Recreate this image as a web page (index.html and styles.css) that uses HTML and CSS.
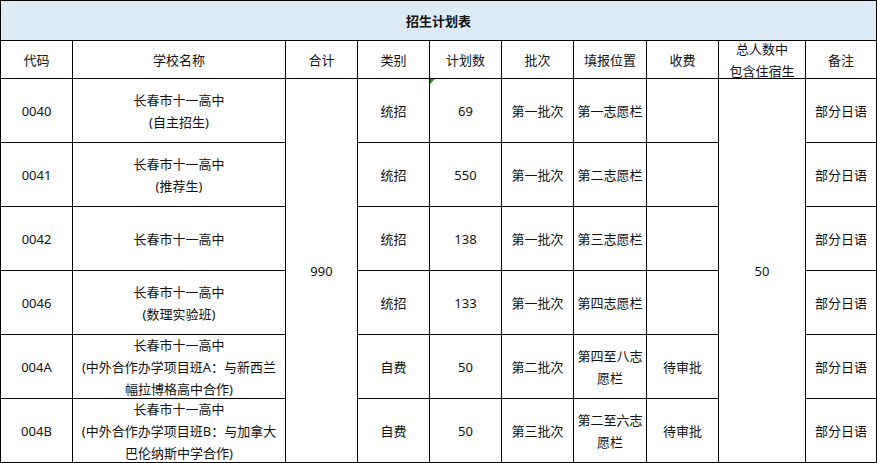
FILE: index.html
```html
<!DOCTYPE html>
<html lang="zh-CN">
<head>
<meta charset="utf-8">
<title>招生计划表</title>
<link rel="stylesheet" href="styles.css">
</head>
<body>
<table class="plan">
  <colgroup>
    <col class="c-code">
    <col class="c-name">
    <col class="c-total">
    <col class="c-type">
    <col class="c-count">
    <col class="c-batch">
    <col class="c-slot">
    <col class="c-fee">
    <col class="c-dorm">
    <col class="c-note">
  </colgroup>
  <thead>
    <tr><th colspan="10" class="title"><div class="cell title-cell">招生计划表</div></th></tr>
    <tr>
      <th><div class="cell head">代码</div></th>
      <th><div class="cell head">学校名称</div></th>
      <th><div class="cell head">合计</div></th>
      <th><div class="cell head">类别</div></th>
      <th><div class="cell head">计划数</div></th>
      <th><div class="cell head">批次</div></th>
      <th><div class="cell head">填报位置</div></th>
      <th><div class="cell head">收费</div></th>
      <th><div class="cell head">总人数中<br>包含住宿生</div></th>
      <th><div class="cell head">备注</div></th>
    </tr>
  </thead>
  <tbody>
    <tr>
      <td><div class="cell">0040</div></td>
      <td><div class="cell">长春市十一高中<br>(自主招生)</div></td>
      <td rowspan="6">990</td>
      <td><div class="cell">统招</div></td>
      <td class="flag"><div class="cell">69</div></td>
      <td><div class="cell">第一批次</div></td>
      <td><div class="cell">第一志愿栏</div></td>
      <td><div class="cell"></div></td>
      <td rowspan="6">50</td>
      <td><div class="cell">部分日语</div></td>
    </tr>
    <tr>
      <td><div class="cell">0041</div></td>
      <td><div class="cell">长春市十一高中<br>(推荐生)</div></td>
      <td><div class="cell">统招</div></td>
      <td><div class="cell">550</div></td>
      <td><div class="cell">第一批次</div></td>
      <td><div class="cell">第二志愿栏</div></td>
      <td><div class="cell"></div></td>
      <td><div class="cell">部分日语</div></td>
    </tr>
    <tr>
      <td><div class="cell">0042</div></td>
      <td><div class="cell">长春市十一高中</div></td>
      <td><div class="cell">统招</div></td>
      <td><div class="cell">138</div></td>
      <td><div class="cell">第一批次</div></td>
      <td><div class="cell">第三志愿栏</div></td>
      <td><div class="cell"></div></td>
      <td><div class="cell">部分日语</div></td>
    </tr>
    <tr>
      <td><div class="cell">0046</div></td>
      <td><div class="cell">长春市十一高中<br>(数理实验班)</div></td>
      <td><div class="cell">统招</div></td>
      <td><div class="cell">133</div></td>
      <td><div class="cell">第一批次</div></td>
      <td><div class="cell">第四志愿栏</div></td>
      <td><div class="cell"></div></td>
      <td><div class="cell">部分日语</div></td>
    </tr>
    <tr>
      <td><div class="cell">004A</div></td>
      <td><div class="cell">长春市十一高中<br>(中外合作办学项目班A：与新西兰<br>幅拉博格高中合作)</div></td>
      <td><div class="cell">自费</div></td>
      <td><div class="cell">50</div></td>
      <td><div class="cell">第二批次</div></td>
      <td><div class="cell">第四至八志<br>愿栏</div></td>
      <td><div class="cell">待审批</div></td>
      <td><div class="cell">部分日语</div></td>
    </tr>
    <tr>
      <td><div class="cell">004B</div></td>
      <td><div class="cell">长春市十一高中<br>(中外合作办学项目班B：与加拿大<br>巴伦纳斯中学合作)</div></td>
      <td><div class="cell">自费</div></td>
      <td><div class="cell">50</div></td>
      <td><div class="cell">第三批次</div></td>
      <td><div class="cell">第二至六志<br>愿栏</div></td>
      <td><div class="cell">待审批</div></td>
      <td><div class="cell">部分日语</div></td>
    </tr>
  </tbody>
</table>
</body>
</html>
```
FILE: styles.css
```css
html, body {
  margin: 0;
  padding: 0;
  background: #ffffff;
}

.plan {
  border-collapse: collapse;
  table-layout: fixed;
  width: 877px;
  font-family: "Noto Sans", "Noto Sans CJK SC", sans-serif;
  font-size: 13px;
  line-height: 22px;
  color: #111111;
}

.c-code { width: 72px; }
.c-name { width: 213px; }
.c-total { width: 72px; }
.c-type { width: 72px; }
.c-count { width: 72px; }
.c-batch { width: 72px; }
.c-slot { width: 73px; }
.c-fee { width: 72px; }
.c-dorm { width: 87px; }
.c-note { width: 71px; }

.plan th,
.plan td {
  border: 1px solid #000000;
  padding: 0;
  text-align: center;
  vertical-align: middle;
  font-weight: normal;
  white-space: nowrap;
}

.cell {
  height: 63px;
  display: flex;
  flex-direction: column;
  align-items: center;
  justify-content: center;
  overflow: visible;
}

.cell.head {
  height: 37px;
}

.cell.title-cell {
  height: 39px;
}

.plan th.title {
  background: #ddebf7;
  font-weight: bold;
}

.plan td.flag {
  position: relative;
}

.plan td.flag::before {
  content: "";
  position: absolute;
  left: 0;
  top: 0;
  width: 0;
  height: 0;
  border-top: 5px solid #1e8c1e;
  border-right: 5px solid transparent;
}
```
